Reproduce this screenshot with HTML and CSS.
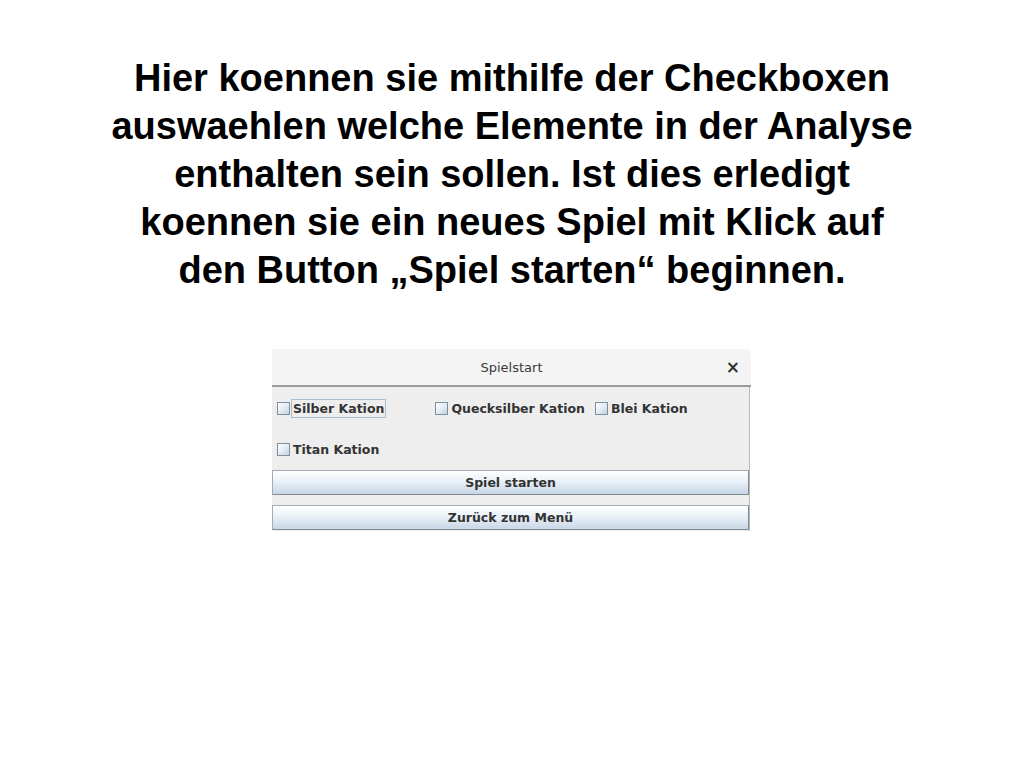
FILE: index.html
```html
<!DOCTYPE html>
<html lang="de">
<head>
<meta charset="utf-8">
<title>Spielstart</title>
<link rel="stylesheet" href="styles.css">
</head>
<body>
<div class="slide">
  <h1 class="caption">Hier koennen sie mithilfe der Checkboxen<br>auswaehlen welche Elemente in der Analyse<br>enthalten sein sollen. Ist dies erledigt<br>koennen sie ein neues Spiel mit Klick auf<br>den Button „Spiel starten“ beginnen.</h1>
  <div class="dialog">
    <div class="titlebar">
      <span class="title">Spielstart</span>
      <span class="close">×</span>
    </div>
    <div class="content">
      <div class="row">
        <label class="cb focus"><span class="box"></span><span class="lbl">Silber Kation</span></label>
        <label class="cb second"><span class="box"></span><span class="lbl">Quecksilber Kation</span></label>
        <label class="cb"><span class="box"></span><span class="lbl">Blei Kation</span></label>
      </div>
      <div class="row">
        <label class="cb"><span class="box"></span><span class="lbl">Titan Kation</span></label>
      </div>
      <button class="btn">Spiel starten</button>
      <button class="btn">Zurück zum Menü</button>
    </div>
  </div>
</div>
</body>
</html>
```
FILE: styles.css
```css
html, body {
  margin: 0;
  padding: 0;
  background: #ffffff;
}
.slide {
  width: 1024px;
  height: 768px;
  display: flex;
  flex-direction: column;
  align-items: center;
}
.caption {
  margin: 54px 0 0 0;
  font-family: "Liberation Sans", Arial, sans-serif;
  font-weight: 700;
  font-size: 38px;
  line-height: 48px;
  text-align: center;
  color: #000;
}
.dialog {
  margin-top: 55px;
  margin-left: -1px;
  width: 479px;
  font-family: "DejaVu Sans", sans-serif;
  font-size: 12px;
  color: #333;
}
.titlebar {
  height: 36px;
  background: #f4f4f4;
  border-bottom: 2px solid #9b9b9b;
  border-top-right-radius: 5px;
  position: relative;
  display: flex;
  align-items: center;
  justify-content: center;
}
.title {
  color: #3a3a3a;
  font-size: 13px;
}
.close {
  position: absolute;
  right: 11px;
  top: 8px;
  font-size: 17px;
  font-weight: 700;
  color: #333;
}
.content {
  width: 477px;
  background: #eeeeee;
  border-right: 1px solid #b8b8b8;
  display: flex;
  flex-direction: column;
  padding-top: 1px;
  padding-bottom: 1px;
}
.row {
  height: 41px;
  display: flex;
  align-items: center;
  padding-left: 5px;
}
.cb {
  display: flex;
  align-items: center;
  margin-right: 8px;
}
.cb.second { margin-left: 41px; }
.box {
  width: 11px;
  height: 11px;
  border: 1px solid #7f8fa0;
  background: linear-gradient(135deg, #ffffff 0%, #e3ecf5 50%, #c4d3e2 100%);
  margin-right: 1px;
}
.lbl {
  font-weight: 700;
  font-size: 12.5px;
  color: #333;
  padding: 1px 1px;
  border: 1px solid transparent;
}
.cb.focus .lbl {
  border-color: #a9bdd1;
}
.btn {
  height: 25px;
  margin: 0 0 10px 0;
  width: 477px;
  border: 1px solid #a3acb6;
  border-right-color: #7f8a96;
  border-bottom-color: #7f8a96;
  background: linear-gradient(to bottom, #ffffff 0%, #eaf1f8 45%, #c8d7e6 100%);
  font-family: "DejaVu Sans", sans-serif;
  font-weight: 700;
  font-size: 12.5px;
  color: #333;
  padding: 0;
}
.btn:last-child { margin-bottom: 0; }
```
